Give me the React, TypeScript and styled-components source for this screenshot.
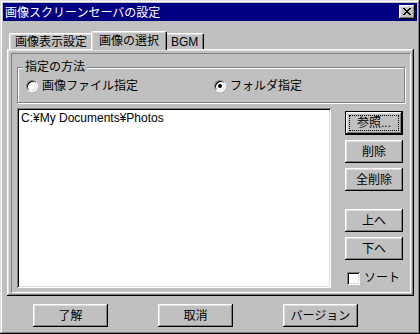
import React from 'react'
import styled, { createGlobalStyle, css } from 'styled-components'

const GlobalStyle = createGlobalStyle`
	html, body {
		margin: 0;
		padding: 0;
		background: #c0c0c0;
	}
	body {
		font-family: "Liberation Sans", "Noto Sans CJK JP", sans-serif;
		font-size: 12px;
		color: #000;
	}
	* {
		box-sizing: border-box;
	}
`

const raised = css`
	box-shadow: inset -1px -1px #000, inset 1px 1px #fff, inset -2px -2px #808080, inset 2px 2px #dfdfdf;
`

const sunken = css`
	box-shadow: inset 1px 1px #808080, inset -1px -1px #fff, inset 2px 2px #000, inset -2px -2px #dfdfdf;
`

const App: React.FC = () => {
	return (
		<>
			<GlobalStyle />
			<Window>
				<TitleBar>
					<Title>画像スクリーンセーバの設定</Title>
					<CloseButton>
						<svg width="8" height="7" viewBox="0 0 8 7" shapeRendering="crispEdges">
							<path d="M0 0h2v1h-2zM6 0h2v1h-2zM1 1h2v1h-2zM5 1h2v1h-2zM2 2h4v1h-4zM3 3h2v1h-2zM2 4h4v1h-4zM1 5h2v1h-2zM5 5h2v1h-2zM0 6h2v1h-2zM6 6h2v1h-2z" fill="#000" />
						</svg>
					</CloseButton>
				</TitleBar>

				<Body>
					<TabStrip>
						<Tab>画像表示設定</Tab>
						<Tab $active>画像の選択</Tab>
						<Tab>BGM</Tab>
					</TabStrip>

					<TabPanel>
						<InnerFrame>
							<GroupBox>
								<Legend>指定の方法</Legend>
								<RadioOption $width={188}>
									<Radio />
									画像ファイル指定
								</RadioOption>
								<RadioOption>
									<Radio $checked />
									フォルダ指定
								</RadioOption>
							</GroupBox>

							<Lower>
								<ListBox>
									<ListItem>C:¥My Documents¥Photos</ListItem>
								</ListBox>

								<SideColumn>
									<Button $default>
										<FocusRing>参照...</FocusRing>
									</Button>
									<Button>削除</Button>
									<Button>全削除</Button>
									<Button $gapTop={13}>上へ</Button>
									<Button>下へ</Button>
									<CheckRow>
										<CheckBox />
										ソート
									</CheckRow>
								</SideColumn>
							</Lower>
						</InnerFrame>
					</TabPanel>

					<Footer>
						<FooterButton>了解</FooterButton>
						<FooterButton>取消</FooterButton>
						<FooterButton>バージョン</FooterButton>
					</Footer>
				</Body>
			</Window>
		</>
	)
}

const Window = styled.div`
	width: 420px;
	height: 334px;
	padding: 3px;
	background: #c0c0c0;
	box-shadow: inset -1px -1px #000, inset 1px 1px #dfdfdf, inset -2px -2px #808080, inset 2px 2px #fff;
	display: flex;
	flex-direction: column;
`

const TitleBar = styled.div`
	height: 18px;
	background: #000080;
	display: flex;
	align-items: center;
	justify-content: space-between;
	padding: 0 2px 0 2px;
`

const Title = styled.span`
	color: #fff;
	line-height: 14px;
	font-family: "Noto Sans CJK JP", sans-serif;
`

const CloseButton = styled.div`
	width: 16px;
	height: 14px;
	background: #c0c0c0;
	${raised};
	display: flex;
	align-items: center;
	justify-content: center;
	padding: 0 1px 1px 0;
`

const Body = styled.div`
	flex: 1;
	display: flex;
	flex-direction: column;
	padding: 9px 3px 0 4px;
`

const TabStrip = styled.div`
	display: flex;
	align-items: flex-end;
	height: 19px;
	padding-left: 2px;
	position: relative;
	z-index: 1;
`

const Tab = styled.div<{ $active?: boolean }>`
	height: ${p => (p.$active ? 19 : 16)}px;
	margin: ${p => (p.$active ? '0 -2px -1px -2px' : '0 0 0 0')};
	padding: ${p => (p.$active ? '0 7px' : '0 5px')};
	background: #c0c0c0;
	border-top: 1px solid #fff;
	border-left: 1px solid #fff;
	border-right: 1px solid #000;
	border-radius: 2px 2px 0 0;
	box-shadow: inset -1px 0 #808080, inset 1px 1px #dfdfdf;
	display: flex;
	align-items: center;
	line-height: 14px;
	position: relative;
	z-index: ${p => (p.$active ? 2 : 0)};
`

const TabPanel = styled.div`
	height: 247px;
	padding: 4px 3px 3px 4px;
	background: #c0c0c0;
	box-shadow: inset -1px -1px #000, inset 1px 1px #fff, inset -2px -2px #808080, inset 2px 2px #dfdfdf;
	display: flex;
`

const InnerFrame = styled.div`
	flex: 1;
	border-top: 1px solid #808080;
	border-left: 1px solid #808080;
	border-right: 1px solid #fff;
	border-bottom: 1px solid #fff;
	padding: 13px 5px 4px 5px;
	display: flex;
	flex-direction: column;
`

const GroupBox = styled.div`
	position: relative;
	height: 36px;
	border: 1px solid #808080;
	box-shadow: 1px 1px #fff, inset 1px 1px #fff;
	display: flex;
	align-items: center;
	padding: 1px 0 0 8px;
`

const Legend = styled.span`
	position: absolute;
	top: -8px;
	left: 5px;
	padding: 0 2px;
	background: #c0c0c0;
	line-height: 14px;
`

const RadioOption = styled.label<{ $width?: number }>`
	display: flex;
	align-items: center;
	gap: 4px;
	width: ${p => (p.$width ? `${p.$width}px` : 'auto')};
	line-height: 14px;
`

const Radio = styled.span<{ $checked?: boolean }>`
	width: 12px;
	height: 12px;
	border-radius: 50%;
	background: #fff;
	border: 1px solid;
	border-color: #808080 #fff #fff #808080;
	box-shadow: inset 1px 1px #000, inset -1px -1px #dfdfdf;
	position: relative;
	flex: none;

	&::after {
		content: '';
		display: ${p => (p.$checked ? 'block' : 'none')};
		position: absolute;
		left: 3px;
		top: 3px;
		width: 4px;
		height: 4px;
		border-radius: 50%;
		background: #000;
	}
`

const Lower = styled.div`
	flex: 1;
	display: flex;
	margin-top: 5px;
	gap: 14px;
`

const ListBox = styled.div`
	width: 314px;
	background: #fff;
	${sunken};
	padding: 3px 4px;
`

const ListItem = styled.div`
	line-height: 14px;
`

const SideColumn = styled.div`
	width: 58px;
	display: flex;
	flex-direction: column;
	gap: 5px;
	padding-top: 3px;
`

const Button = styled.div<{ $default?: boolean; $gapTop?: number }>`
	height: 23px;
	margin-top: ${p => p.$gapTop ?? 0}px;
	background: #c0c0c0;
	display: flex;
	align-items: center;
	justify-content: center;
	line-height: 14px;
	${p =>
		p.$default
			? css`
					border: 1px solid #000;
					box-shadow: inset -1px -1px #000, inset 1px 1px #fff, inset -2px -2px #808080, inset 2px 2px #dfdfdf;
					height: 24px;
					padding: 3px;
			  `
			: raised};
`

const FocusRing = styled.span`
	flex: 1;
	align-self: stretch;
	display: flex;
	align-items: center;
	justify-content: center;
	outline: 1px dotted #000;
	outline-offset: -1px;
`

const CheckRow = styled.label`
	margin-top: 6px;
	display: flex;
	align-items: center;
	gap: 4px;
	padding-left: 2px;
	line-height: 14px;
`

const CheckBox = styled.span`
	width: 13px;
	height: 13px;
	background: #fff;
	${sunken};
`

const Footer = styled.div`
	display: flex;
	gap: 50px;
	padding: 8px 0 0 26px;
`

const FooterButton = styled.div`
	width: 75px;
	height: 23px;
	background: #c0c0c0;
	${raised};
	display: flex;
	align-items: center;
	justify-content: center;
	line-height: 14px;
`

export default App
